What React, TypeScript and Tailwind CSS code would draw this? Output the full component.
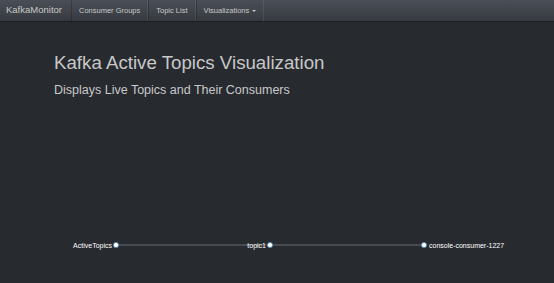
const NAV = ['Consumer Groups', 'Topic List']

export default function App() {
  return (
    <div className="min-h-[283px] bg-[#272b30] font-['Liberation_Sans',Arial,sans-serif]">
      <nav className="flex h-[22px] items-stretch border-b border-[#1c1e22] bg-gradient-to-b from-[#4a4e56] via-[#40444b] to-[#363a40]">
        <span className="flex items-center pl-[6px] pr-[9px] text-[9.5px] text-[#c8c8c8]">KafkaMonitor</span>
        <ul className="flex items-stretch">
          {NAV.map((item) => (
            <li
              key={item}
              className="flex items-center border-l border-l-[rgba(0,0,0,0.2)] border-r border-r-[rgba(255,255,255,0.08)] px-[7px] text-[7.5px] text-[#c8c8c8]"
            >
              {item}
            </li>
          ))}
          <li className="flex items-center gap-[3px] border-l border-l-[rgba(0,0,0,0.2)] border-r border-r-[rgba(255,255,255,0.08)] px-[7px] text-[7.5px] text-[#c8c8c8]">
            Visualizations
            <span className="inline-block h-0 w-0 border-x-[2.5px] border-t-[2.5px] border-x-transparent border-t-[#c8c8c8]" />
          </li>
        </ul>
      </nav>

      <div className="px-[54px] pt-[30px]">
        <h1 className="text-[18.7px] leading-[22px] text-[#c8c8c8]">Kafka Active Topics Visualization</h1>
        <h2 className="mt-[8px] text-[12.5px] leading-[16px] text-[#c8c8c8]">Displays Live Topics and Their Consumers</h2>
      </div>

      <div className="relative mt-[137px] h-[20px]">
        <svg width="554" height="20" className="absolute left-0 top-0">
          <line x1="116" y1="10" x2="270" y2="10" stroke="#55585c" strokeWidth="1.5" />
          <line x1="270" y1="10" x2="424" y2="10" stroke="#55585c" strokeWidth="1.5" />
          {[116, 270, 424].map((cx) => (
            <circle key={cx} cx={cx} cy="10" r="2.6" fill="#fff" stroke="#4682b4" strokeWidth="0.8" />
          ))}
          <text x="112" y="12.5" textAnchor="end" fontSize="7" fill="#fff" fontFamily="Liberation Sans, Arial, sans-serif">ActiveTopics</text>
          <text x="266" y="12.5" textAnchor="end" fontSize="7" fill="#fff" fontFamily="Liberation Sans, Arial, sans-serif">topic1</text>
          <text x="429" y="12.5" textAnchor="start" fontSize="7" fill="#fff" fontFamily="Liberation Sans, Arial, sans-serif">console-consumer-1227</text>
        </svg>
      </div>
    </div>
  )
}
